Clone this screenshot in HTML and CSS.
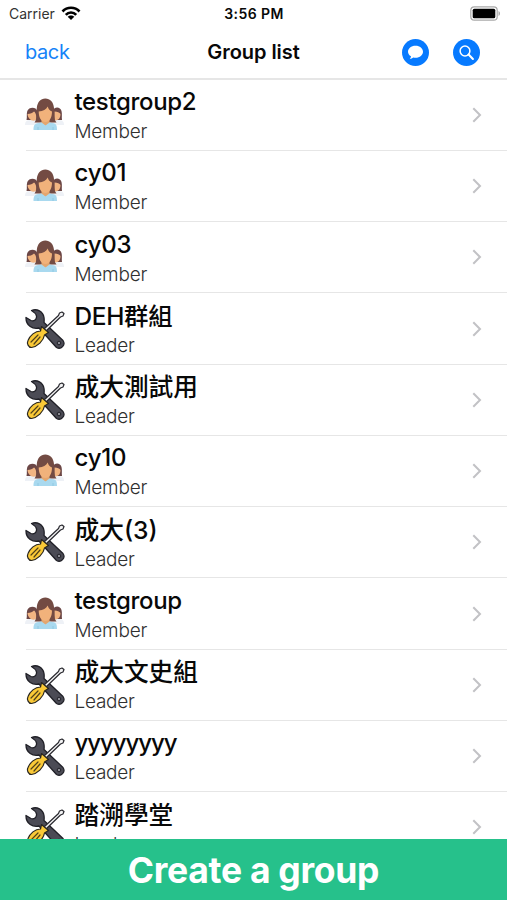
FILE: index.html
```html
<!DOCTYPE html>
<html lang="zh-Hant">
<head>
<meta charset="utf-8">
<title>Group list</title>
<link rel="stylesheet" href="styles.css">
</head>
<body>
<svg class="sprite" width="0" height="0" aria-hidden="true">
  <symbol id="people" viewBox="0 0 40 40">
    <path d="M0 30c0-4 2-5 6-5h27c4 0 6 1 6 5z" fill="#eef1f6"/>
    <path d="M1.500 25c.8-3-.2-6 .8-9 1.500-4.500 9-4.500 10 0v9zM28 25v-9c1-5 7.500-4.500 8.500 0 .8 3 0 6 .5 9z" fill="#6c4746"/>
    <path d="M2.500 19c3 0 5-1 6.500-2.500 2 1 3 6 2 8.500-4 2-8-1-8.500-6zM29.500 16.500c3 0 5 1 6 2.500 0 5-3 7-6 6z" fill="#f2b582"/>
    <path d="M9.500 27.500c3-4 1.500-8 2.300-14.500C12.500 7 15.500 3.500 20.300 3.500S28.500 7 29 13c.7 6.500-.6 10.500 2.500 14.500z" fill="#734b43"/>
    <path d="M16.500 23h8v6l-4 2-4-2z" fill="#e4a66f"/>
    <path d="M13.700 16.500c4.500-.5 7.500-2 9-5 1 3 2 4 4.300 5 0 6.500-2.800 10.500-6.600 10.500S13.700 23 13.700 16.500z" fill="#f1b27b"/>
    <path d="M8.500 35c0-5.500 1-6.500 8-7.500l4 3 4-3c7 1 7.500 2 7.500 7.500z" fill="#a9d9ef"/>
    <path d="M13 32v3M28 32v3" stroke="#8cc5df" stroke-width=".8"/>
  </symbol>
  <symbol id="tools" viewBox="0 0 40 40">
    <path d="M6.500 1.500C12-.8 18 2.500 19 8.500c.3 2 .2 3.500 0 5L38 31.500c3 4.500-2 9.500-6.500 7L14 19C8 20.500 .8 17 1 8.500L6 11.500c3 1 6-1 5.500-4.500C11 4.500 9 3 6.500 1.500z" fill="#4b4b55" stroke="#202027" stroke-width="1.300" stroke-linejoin="round"/>
    <circle cx="34" cy="34" r="1.800" fill="#8a8a92" stroke="#202027"/>
    <path d="M19 20 33.500 6.500l1-2.500 2.500-1L39 4.500 38 7l-2.500 1L21 22z" fill="#f4f4f5" stroke="#29292f" stroke-width="1.200" stroke-linejoin="round"/>
    <path d="m16.500 17.500 7 6-4 2.500c-1 6-7 11.500-13 12.500-3 0-5-4-3.500-7 2-5 7-9.500 12.500-9.500z" fill="#fac937" stroke="#292620" stroke-width="1.200" stroke-linejoin="round"/>
    <path d="m6 33 7-7m-4 9 6-7" stroke="#514119" stroke-width="1.200" stroke-linecap="round"/>
  </symbol>
  <symbol id="chevron" viewBox="0 0 10 16">
    <path d="m1.300 1.300 6.700 6.700-6.700 6.700" fill="none" stroke="#c2c2c5" stroke-width="2"/>
  </symbol>
</svg>
<div class="screen">
  <div class="status">
    <div class="carrier"><span>Carrier</span>
      <svg width="20" height="15" viewBox="0 0 20 15" fill="none" stroke="#000" stroke-width="2.700"><path d="M1.500 5.500C6.200.5 13.800.5 18.500 5.500M4.800 8.800c2.900-3.100 7.500-3.100 10.400 0"/><path d="M6.700 10.800c1.800-1.800 4.800-1.800 6.600 0L10 14z" fill="#000" stroke="none"/></svg>
    </div>
    <div class="time">3:56 PM</div>
    <svg class="battery" width="31" height="15" viewBox="0 0 31 15"><rect x=".8" y=".8" width="26.400" height="13.400" rx="3.500" fill="#fff" stroke="#a9a9a9" stroke-width="1.200"/><rect x="2.700" y="2.700" width="22.600" height="9.600" rx="1.600"/><path d="M28.500 5c2 .7 2 4.300 0 5z" fill="#aaa"/></svg>
  </div>
  <header class="nav">
    <a class="back">back</a>
    <h1>Group list</h1>
    <div class="actions">
      <svg width="27" height="27" viewBox="0 0 27 27"><circle cx="13.500" cy="13.500" r="13.500" fill="#077aff"/><path d="M13.500 6.700c4.400 0 7.500 2.700 7.500 6s-3.100 6-7.500 6c-.8 0-1.500-.1-2.200-.3-1 .9-2.200 1.400-3.500 1.400.8-.7 1.200-1.500 1.200-2.500C7.100 16.200 6 14.600 6 12.700c0-3.300 3.100-6 7.500-6z" fill="#fff"/></svg>
      <svg width="27" height="27" viewBox="0 0 27 27"><circle cx="13.500" cy="13.500" r="13.500" fill="#077aff"/><circle cx="12" cy="12" r="4.900" fill="none" stroke="#fff" stroke-width="1.500"/><path d="m15.600 15.600 4.300 4.300" stroke="#fff" stroke-width="2.100" stroke-linecap="round"/></svg>
    </div>
  </header>
  <main class="list">
    <div class="row"><svg class="icon"><use href="#people"/></svg><div class="text"><h2>testgroup2</h2><p>Member</p></div><svg class="chevron"><use href="#chevron"/></svg></div>
    <div class="row"><svg class="icon"><use href="#people"/></svg><div class="text"><h2 class="code">cy01</h2><p>Member</p></div><svg class="chevron"><use href="#chevron"/></svg></div>
    <div class="row"><svg class="icon"><use href="#people"/></svg><div class="text"><h2 class="code">cy03</h2><p>Member</p></div><svg class="chevron"><use href="#chevron"/></svg></div>
    <div class="row"><svg class="icon"><use href="#tools"/></svg><div class="text"><h2 class="mixed">DEH群組</h2><p>Leader</p></div><svg class="chevron"><use href="#chevron"/></svg></div>
    <div class="row"><svg class="icon"><use href="#tools"/></svg><div class="text"><h2 class="cjk">成大測試用</h2><p>Leader</p></div><svg class="chevron"><use href="#chevron"/></svg></div>
    <div class="row"><svg class="icon"><use href="#people"/></svg><div class="text"><h2 class="code">cy10</h2><p>Member</p></div><svg class="chevron"><use href="#chevron"/></svg></div>
    <div class="row"><svg class="icon"><use href="#tools"/></svg><div class="text"><h2 class="cjk">成大(3)</h2><p>Leader</p></div><svg class="chevron"><use href="#chevron"/></svg></div>
    <div class="row"><svg class="icon"><use href="#people"/></svg><div class="text"><h2>testgroup</h2><p>Member</p></div><svg class="chevron"><use href="#chevron"/></svg></div>
    <div class="row"><svg class="icon"><use href="#tools"/></svg><div class="text"><h2 class="cjk">成大文史組</h2><p>Leader</p></div><svg class="chevron"><use href="#chevron"/></svg></div>
    <div class="row"><svg class="icon"><use href="#tools"/></svg><div class="text"><h2 class="narrow">yyyyyyyy</h2><p>Leader</p></div><svg class="chevron"><use href="#chevron"/></svg></div>
    <div class="row"><svg class="icon"><use href="#tools"/></svg><div class="text"><h2 class="cjk">踏溯學堂</h2><p>Leader</p></div><svg class="chevron"><use href="#chevron"/></svg></div>
  </main>
  <button class="create">Create a group</button>
</div>
</body>
</html>
```
FILE: styles.css
```css
* { box-sizing: border-box; }
body {
  margin: 0;
  background: #fff;
  color: #080808;
  font-family: Inter, "Noto Sans CJK TC", sans-serif;
}
h1, h2, p { margin: 0; }
.sprite { position: absolute; }
.screen {
  width: 507px;
  height: 900px;
  display: flex;
  flex-direction: column;
  overflow: hidden;
}
.status {
  height: 26px;
  flex: none;
  display: grid;
  grid-template-columns: 1fr auto 1fr;
  align-items: center;
  padding: 1px 6px 0 9px;
  font-size: 14px;
}
.carrier { display: flex; align-items: center; gap: 6px; color: #333; }
.time { font-weight: 600; letter-spacing: 0.4px; margin-right: 2px; }
.battery { justify-self: end; }
.nav {
  height: 53.7px;
  flex: none;
  display: grid;
  grid-template-columns: 1fr auto 1fr;
  align-items: center;
  padding: 1px 27px 0 25px;
  border-bottom: 2px solid #e6e6e6;
}
.back { color: #1683f8; font-size: 20px; letter-spacing: -0.4px; }
.nav h1 {
  font-size: 20px;
  font-weight: 600;
  letter-spacing: -0.05px;
  margin-left: 2px;
}
.actions { display: flex; justify-content: flex-end; gap: 24px; }
.list { flex: 1; min-height: 0; overflow: hidden; }
.row {
  height: 71.25px;
  margin-left: 26px;
  padding-right: 25px;
  border-bottom: 1px solid #e6e6e6;
  display: flex;
  align-items: center;
}
.icon { width: 40px; height: 40px; flex: none; margin-right: 8px; margin-left: -1px; }
.text { flex: 1; margin-left: 1.5px; padding-top: 4.8px; }
.text h2 {
  height: 30px;
  line-height: 30px;
  font-size: 24px;
  font-weight: 500;
  letter-spacing: -0.35px;
  white-space: nowrap;
}
.text .code { letter-spacing: -0.2px; }
.text .mixed { font-size: 24.4px; letter-spacing: -0.3px; }
.text .cjk { font-size: 24.7px; letter-spacing: 0; }
.text .narrow { letter-spacing: -1.05px; }
.text p {
  height: 30px;
  line-height: 30px;
  font-size: 19px;
  font-weight: 300;
  letter-spacing: -0.25px;
  color: #303030;
}
.chevron { width: 10px; height: 16px; flex: none; }
.create {
  height: 61px;
  flex: none;
  border: 0;
  padding: 2px 0 0;
  background: #26c18b;
  color: #fff;
  font-family: inherit;
  font-size: 35.5px;
  font-weight: 700;
  letter-spacing: -0.3px;
}
```
